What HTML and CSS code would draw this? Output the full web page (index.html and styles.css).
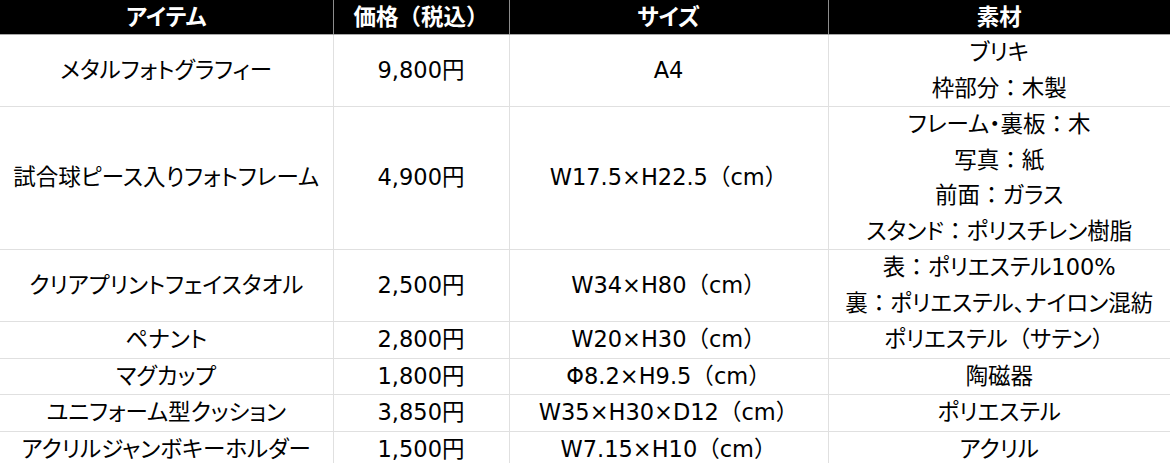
FILE: index.html
```html
<!DOCTYPE html>
<html lang="ja">
<head>
<meta charset="utf-8">
<link rel="stylesheet" href="styles.css">
</head>
<body>
<table class="goods">
  <colgroup>
    <col class="c-item"><col class="c-price"><col class="c-size"><col class="c-mat">
  </colgroup>
  <thead>
    <tr class="head">
      <th>アイテム</th>
      <th>価格<span class="fw">（</span>税込<span class="fw">）</span></th>
      <th>サイズ</th>
      <th>素材</th>
    </tr>
  </thead>
  <tbody>
    <tr class="r2">
      <td>メタルフォトグラフィー</td>
      <td>9,800円</td>
      <td>A4</td>
      <td>ブリキ<br>枠部分<span class="fw">：</span>木製</td>
    </tr>
    <tr class="r4">
      <td>試合球ピース入りフォトフレーム</td>
      <td>4,900円</td>
      <td>W17.5×H22.5<span class="fw">（</span>cm<span class="fw">）</span></td>
      <td>フレーム・裏板<span class="fw">：</span>木<br>写真<span class="fw">：</span>紙<br>前面<span class="fw">：</span>ガラス<br>スタンド<span class="fw">：</span>ポリスチレン樹脂</td>
    </tr>
    <tr class="r2">
      <td>クリアプリントフェイスタオル</td>
      <td>2,500円</td>
      <td>W34×H80<span class="fw">（</span>cm<span class="fw">）</span></td>
      <td>表<span class="fw">：</span>ポリエステル100%<br>裏<span class="fw">：</span>ポリエステル、ナイロン混紡</td>
    </tr>
    <tr class="r1">
      <td>ペナント</td>
      <td>2,800円</td>
      <td>W20×H30<span class="fw">（</span>cm<span class="fw">）</span></td>
      <td>ポリエステル<span class="fw">（</span>サテン<span class="fw">）</span></td>
    </tr>
    <tr class="r1">
      <td>マグカップ</td>
      <td>1,800円</td>
      <td>Φ8.2×H9.5<span class="fw">（</span>cm<span class="fw">）</span></td>
      <td>陶磁器</td>
    </tr>
    <tr class="r1">
      <td>ユニフォーム型クッション</td>
      <td>3,850円</td>
      <td>W35×H30×D12<span class="fw">（</span>cm<span class="fw">）</span></td>
      <td>ポリエステル</td>
    </tr>
    <tr class="r1">
      <td>アクリルジャンボキーホルダー</td>
      <td>1,500円</td>
      <td>W7.15×H10<span class="fw">（</span>cm<span class="fw">）</span></td>
      <td>アクリル</td>
    </tr>
  </tbody>
</table>
</body>
</html>
```
FILE: styles.css
```css
html, body {
  margin: 0;
  padding: 0;
  background: #ffffff;
}

.goods {
  width: 1170px;
  border-collapse: collapse;
  table-layout: fixed;
  font-family: "DejaVu Sans", "Noto Sans CJK JP", sans-serif;
  font-size: 22.5px;
  line-height: 35.5px;
  color: #000000;
  font-feature-settings: "palt" 1;
}

.c-item { width: 333px; }
.c-price { width: 176px; }
.c-size { width: 319px; }
.c-mat { width: 342px; }

.fw {
  font-feature-settings: "palt" 0;
}

.goods th,
.goods td {
  padding: 0;
  text-align: center;
  vertical-align: middle;
  white-space: nowrap;
}

.head th {
  background: #000000;
  color: #ffffff;
  font-weight: 700;
  height: 34px;
  line-height: 32px;
  border-left: 1px solid #8c8c8c;
  border-bottom: 1px solid #a8a8a8;
}

.head th:first-child {
  border-left: none;
}

.goods td {
  border: 1px solid #e0e0e0;
  border-top: none;
}

.goods td:first-child { border-left: none; }
.goods td:last-child { border-right: none; }

.r1 td { height: 35px; }
.r2 td { height: 71px; }
.r4 td { height: 141px; }
```
